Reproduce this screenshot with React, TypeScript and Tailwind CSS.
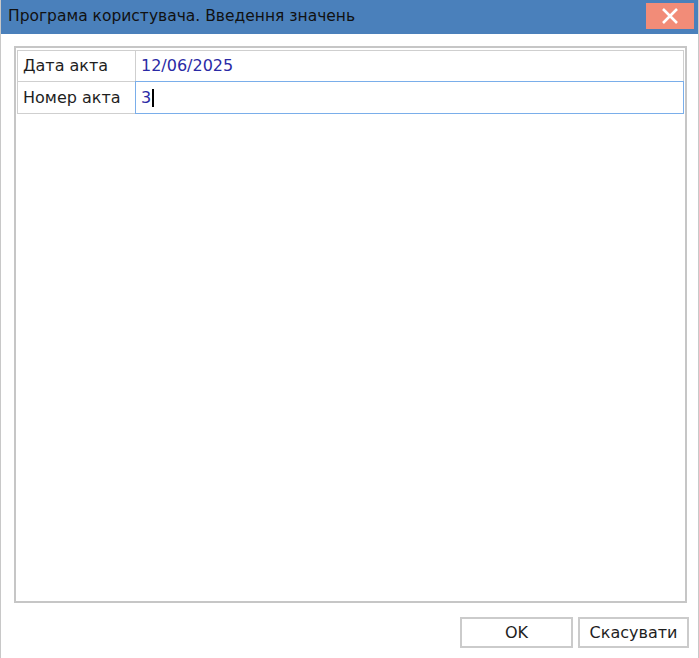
export default function App() {
  return (
    <div
      className="w-[699px] h-[658px] flex flex-col bg-white border-x border-[#c8c8c8] text-[#1e1e1e]"
      style={{ fontFamily: '"DejaVu Sans", Verdana, sans-serif' }}
    >
      <div className="h-[34px] shrink-0 bg-[#4a80bb] flex items-center justify-between pl-[7px] pr-[4px]">
        <span className="text-[15.5px] text-[#111]">Програма користувача. Введення значень</span>
        <div className="w-[48px] h-[26px] bg-[#f28c78] flex items-center justify-center mb-[3px]">
          <svg width="18" height="18" viewBox="0 0 18 18">
            <path d="M2 2L16 16M16 2L2 16" stroke="white" strokeWidth="2.6" />
          </svg>
        </div>
      </div>

      <div className="flex-1 flex flex-col pl-[13px] pr-[11px] pt-[12px]">
        <div className="h-[557px] border-2 border-[#c6c6c6] pt-[2px] px-[1px] flex flex-col">
          <div className="flex h-[32px] border border-[#cfcfcf]">
            <div className="w-[118px] border-r border-[#cfcfcf] pl-[5px] flex items-center text-[16px]">
              Дата акта
            </div>
            <div className="flex-1 pl-[5px] flex items-center text-[16px] text-[#2a2aa5]">
              12/06/2025
            </div>
          </div>
          <div className="flex h-[32px] border border-t-0 border-[#cfcfcf]">
            <div className="w-[118px] border-r border-[#cfcfcf] pl-[5px] flex items-center text-[16px]">
              Номер акта
            </div>
            <div className="flex-1 -ml-[1px] -mt-[1px] -mb-[1px] -mr-[1px] border border-[#7aaeea] pl-[5px] flex items-center text-[16px] text-[#2a2aa5]">
              3<span className="inline-block w-[1.5px] h-[18px] bg-black ml-[1px]" />
            </div>
          </div>
        </div>

        <div className="flex justify-end gap-[5px] mt-[14px] -mr-[2px]">
          <button className="w-[113px] h-[31px] border-2 border-[#cbcbcb] bg-white text-[16px]">OK</button>
          <button className="w-[111px] h-[31px] border-2 border-[#cbcbcb] bg-white text-[16px]">Скасувати</button>
        </div>
      </div>
    </div>
  );
}
